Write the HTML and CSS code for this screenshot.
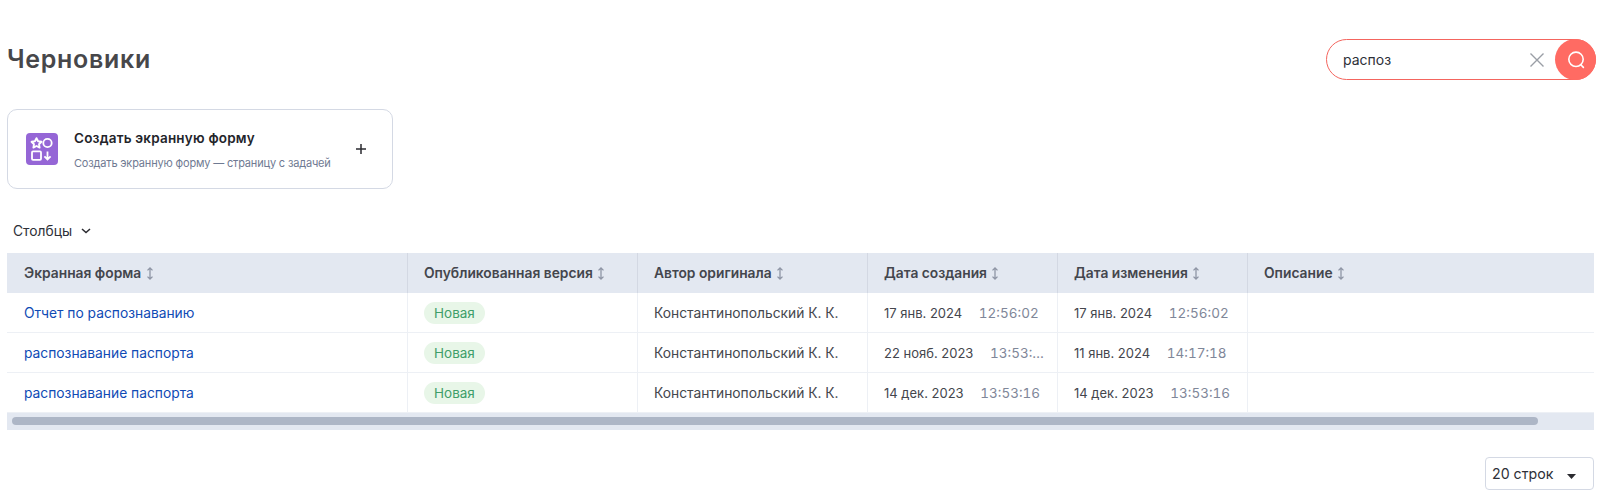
FILE: index.html
```html
<!DOCTYPE html>
<html>
<head>
    <meta charset="utf-8">
    <title>Черновики</title>
    <link rel="stylesheet" href="styles.css">
</head>
<body>
    <div class="page-head">
        <h1 class="page-title">Черновики</h1>
        <div class="search">
            <span class="search-value">распоз</span>
            <svg class="search-clear" width="16" height="16" viewBox="0 0 16 16"><path d="M1.5 1.5l13 13M14.5 1.5l-13 13" fill="none" stroke="#9a9ea6" stroke-width="1.4"/></svg>
            <div class="search-btn">
                <svg width="20" height="20" viewBox="0 0 20 20"><circle cx="10" cy="9.3" r="7.2" fill="none" stroke="#fff" stroke-width="1.6"/><path d="M14.8 14.8l2.6 2.6" fill="none" stroke="#fff" stroke-width="1.6" stroke-linecap="round"/></svg>
            </div>
        </div>
    </div>

    <div class="create-card">
        <svg class="create-icon" width="32" height="32" viewBox="0 0 32 32">
            <rect width="32" height="32" rx="4" fill="#9566d6"/>
            <path d="M10.5 5.2l1.6 3.1 3.4.5-2.5 2.4.6 3.4-3.1-1.6-3.1 1.6.6-3.4-2.5-2.4 3.4-.5z" fill="none" stroke="#fff" stroke-width="1.9" stroke-linejoin="round"/>
            <circle cx="21.5" cy="10" r="4.2" fill="none" stroke="#fff" stroke-width="1.8"/>
            <rect x="6" y="18.4" width="9" height="8.4" rx="1" fill="none" stroke="#fff" stroke-width="1.8"/>
            <path d="M21.5 18.5v8M18.4 23.4l3.1 3.1 3.1-3.1" fill="none" stroke="#fff" stroke-width="1.8"/>
        </svg>
        <div class="create-text">
            <div class="create-title">Создать экранную форму</div>
            <div class="create-sub">Создать экранную форму — страницу с задачей</div>
        </div>
        <svg class="create-plus" width="10" height="10" viewBox="0 0 10 10"><path d="M5 0v10M0 5h10" fill="none" stroke="#2b2b30" stroke-width="1.5"/></svg>
    </div>

    <div class="columns-toggle">
        Столбцы
        <svg width="10" height="6" viewBox="0 0 10 6"><path d="M1 1l4 3.6L9 1" fill="none" stroke="#2b2b30" stroke-width="1.5"/></svg>
    </div>

    <div class="table-wrap">
        <table class="grid">
            <colgroup>
                <col class="col-form">
                <col class="col-version">
                <col class="col-author">
                <col class="col-created">
                <col class="col-changed">
                <col>
            </colgroup>
            <thead>
                <tr>
                    <th>Экранная форма <svg class="sort" width="8" height="13" viewBox="0 0 8 13"><path d="M4 1v11M1.5 3.4L4 1l2.5 2.4M1.5 9.6L4 12l2.5-2.4" fill="none" stroke="#8f96a6" stroke-width="1.3"/></svg></th>
                    <th>Опубликованная версия <svg class="sort" width="8" height="13" viewBox="0 0 8 13"><path d="M4 1v11M1.5 3.4L4 1l2.5 2.4M1.5 9.6L4 12l2.5-2.4" fill="none" stroke="#8f96a6" stroke-width="1.3"/></svg></th>
                    <th>Автор оригинала <svg class="sort" width="8" height="13" viewBox="0 0 8 13"><path d="M4 1v11M1.5 3.4L4 1l2.5 2.4M1.5 9.6L4 12l2.5-2.4" fill="none" stroke="#8f96a6" stroke-width="1.3"/></svg></th>
                    <th>Дата создания <svg class="sort" width="8" height="13" viewBox="0 0 8 13"><path d="M4 1v11M1.5 3.4L4 1l2.5 2.4M1.5 9.6L4 12l2.5-2.4" fill="none" stroke="#8f96a6" stroke-width="1.3"/></svg></th>
                    <th>Дата изменения <svg class="sort" width="8" height="13" viewBox="0 0 8 13"><path d="M4 1v11M1.5 3.4L4 1l2.5 2.4M1.5 9.6L4 12l2.5-2.4" fill="none" stroke="#8f96a6" stroke-width="1.3"/></svg></th>
                    <th>Описание <svg class="sort" width="8" height="13" viewBox="0 0 8 13"><path d="M4 1v11M1.5 3.4L4 1l2.5 2.4M1.5 9.6L4 12l2.5-2.4" fill="none" stroke="#8f96a6" stroke-width="1.3"/></svg></th>
                </tr>
            </thead>
            <tbody>
                <tr>
                    <td><a class="form-link" href="#">Отчет по распознаванию</a></td>
                    <td><span class="badge">Новая</span></td>
                    <td>Константинопольский К. К.</td>
                    <td class="date">17 янв. 2024 <span class="time">12:56:02</span></td>
                    <td class="date">17 янв. 2024 <span class="time">12:56:02</span></td>
                    <td></td>
                </tr>
                <tr>
                    <td><a class="form-link" href="#">распознавание паспорта</a></td>
                    <td><span class="badge">Новая</span></td>
                    <td>Константинопольский К. К.</td>
                    <td class="date">22 нояб. 2023 <span class="time">13:53:…</span></td>
                    <td class="date">11 янв. 2024 <span class="time">14:17:18</span></td>
                    <td></td>
                </tr>
                <tr>
                    <td><a class="form-link" href="#">распознавание паспорта</a></td>
                    <td><span class="badge">Новая</span></td>
                    <td>Константинопольский К. К.</td>
                    <td class="date">14 дек. 2023 <span class="time">13:53:16</span></td>
                    <td class="date">14 дек. 2023 <span class="time">13:53:16</span></td>
                    <td></td>
                </tr>
            </tbody>
        </table>
        <div class="scroll-track"><div class="scroll-thumb"></div></div>
    </div>

    <div class="table-foot">
        <div class="page-size">
            20 строк
            <svg width="9" height="5" viewBox="0 0 9 5"><path d="M0 0h9L4.5 5z" fill="#2b2b30"/></svg>
        </div>
    </div>
</body>
</html>
```

FILE: styles.css
```css
* {
    margin: 0;
    padding: 0;
    box-sizing: border-box;
}
body {
    background: #fff;
    font-family: Inter, "Noto Sans", sans-serif;
    font-size: 13.8px;
    color: #44464d;
    padding: 39px 16px 0 7px;
    overflow: hidden;
}
.page-head {
    display: flex;
    justify-content: space-between;
    align-items: center;
    height: 41px;
    margin-right: -2px;
}
.page-title {
    font-size: 25px;
    font-weight: 600;
    color: #47474a;
    line-height: 1;
    letter-spacing: 0.7px;
}
.search {
    display: flex;
    align-items: center;
    width: 270px;
    height: 41px;
    border: 1px solid #f4655e;
    border-radius: 21px;
    padding-left: 16px;
    position: relative;
    color: #2e3038;
    font-size: 14px;
}
.search-value {
    flex: 1;
}
.search-clear {
    margin-right: 50px;
}
.search-btn {
    position: absolute;
    right: -1px;
    top: -1px;
    width: 41px;
    height: 41px;
    border-radius: 50%;
    background: #ff6b63;
    display: flex;
    justify-content: center;
    align-items: center;
}
.create-card {
    display: flex;
    align-items: center;
    width: 386px;
    height: 80px;
    margin-top: 29px;
    padding: 0 26px 0 18px;
    border: 1px solid #d4d9e4;
    border-radius: 10px;
}
.create-icon {
    flex: none;
}
.create-text {
    flex: 1;
    margin-left: 16px;
    padding-top: 1px;
}
.create-title {
    font-size: 13.5px;
    font-weight: 600;
    letter-spacing: 0.2px;
    color: #23242a;
}
.create-sub {
    font-size: 11px;
    letter-spacing: -0.17px;
    color: #6f7a92;
    margin-top: 10px;
}
.columns-toggle {
    display: flex;
    align-items: center;
    gap: 9px;
    height: 20px;
    margin: 32px 0 12px 6px;
    color: #2e3038;
}
.table-wrap {
    background: #e3e8f1;
}
.grid {
    width: 100%;
    table-layout: fixed;
    border-collapse: separate;
    border-spacing: 0;
}
.col-form { width: 401px; }
.col-version { width: 230px; }
.col-author { width: 230px; }
.col-created { width: 190px; }
.col-changed { width: 190px; }
.grid th {
    height: 40px;
    padding: 0 16px;
    text-align: left;
    font-size: 13.8px;
    font-weight: 600;
    color: #44464d;
    white-space: nowrap;
    background: #e3e8f1;
    border-right: 1px solid #d3d8e3;
}
.grid th:first-child,
.grid td:first-child {
    padding-left: 17px;
}
.grid th:last-child,
.grid td:last-child {
    border-right: none;
}
.grid td {
    height: 40px;
    padding: 0 16px;
    background: #fff;
    white-space: nowrap;
    overflow: hidden;
    border-right: 1px solid #edf0f5;
    border-bottom: 1px solid #edf0f5;
}
.sort {
    vertical-align: -2px;
    margin-left: 1px;
}
.form-link {
    color: #0f4bb5;
    text-decoration: none;
}
.badge {
    display: inline-block;
    padding: 0 10px;
    line-height: 22px;
    border-radius: 11px;
    background: #e8f6e8;
    color: #3f9e6a;
    font-size: 13.5px;
}
.grid td.date {
    font-size: 13px;
}
.time {
    font-size: 13.5px;
    font-variant-numeric: tabular-nums;
    color: #7f8799;
    margin-left: 13px;
}
.scroll-track {
    height: 17px;
    padding: 4px 4px 0 5px;
}
.scroll-thumb {
    width: 1526px;
    height: 8px;
    border-radius: 4px;
    background: #adb6c6;
}
.table-foot {
    display: flex;
    justify-content: flex-end;
    margin-top: 27px;
}
.page-size {
    display: flex;
    align-items: center;
    justify-content: space-between;
    width: 109px;
    height: 33px;
    padding: 0 17px 0 6px;
    border: 1px solid #d4d9e4;
    border-radius: 4px;
    font-size: 14.2px;
    color: #2e3038;
}
.page-size svg {
    margin-top: 6px;
}
```
